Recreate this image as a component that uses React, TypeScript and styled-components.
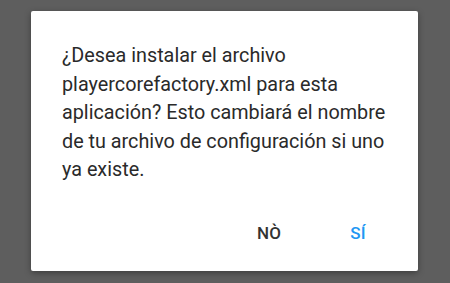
import { FC } from "react";
import styled, { createGlobalStyle } from "styled-components";

const GlobalStyle = createGlobalStyle`
  html, body {
    margin: 0;
    padding: 0;
    background: #5e5e5e;
    font-family: Roboto, "Noto Sans", sans-serif;
  }
`;

const App: FC = () => {
  return (
    <>
      <GlobalStyle />
      <Screen>
        <Dialog role="dialog">
          <Message>
            ¿Desea instalar el archivo playercorefactory.xml para esta
            aplicación? Esto cambiará el nombre de tu archivo de configuración
            si uno ya existe.
          </Message>
          <Actions>
            <ActionButton>NÒ</ActionButton>
            <ActionButton primary>SÍ</ActionButton>
          </Actions>
        </Dialog>
      </Screen>
    </>
  );
};

export default App;

interface ButtonProps {
  primary?: boolean;
}

const Screen = styled.div`
  width: 450px;
  height: 283px;
  padding: 11px 0 0 31px;
  box-sizing: border-box;
  overflow: hidden;
`;

const Dialog = styled.div`
  width: 387px;
  height: 260px;
  background: #fff;
  border-radius: 2px;
  box-shadow: 0 2px 6px rgba(0, 0, 0, 0.35);
  display: flex;
  flex-direction: column;
  box-sizing: border-box;
`;

const Message = styled.p`
  margin: 0;
  padding: 31px 26px 0 31px;
  font-size: 19.8px;
  line-height: 28.5px;
  color: #2a2a2a;
`;

const Actions = styled.div`
  margin-top: auto;
  display: flex;
  justify-content: flex-end;
  gap: 53px;
  padding: 0 44px 20px 0;
`;

const ActionButton = styled.button<ButtonProps>`
  border: none;
  background: transparent;
  padding: 8px 8px;
  font-family: Roboto, "Noto Sans", sans-serif;
  font-size: 17px;
  font-weight: 500;
  letter-spacing: 0.3px;
  color: ${(p) => (p.primary ? "#2196f3" : "#333333")};
  cursor: pointer;
`;
